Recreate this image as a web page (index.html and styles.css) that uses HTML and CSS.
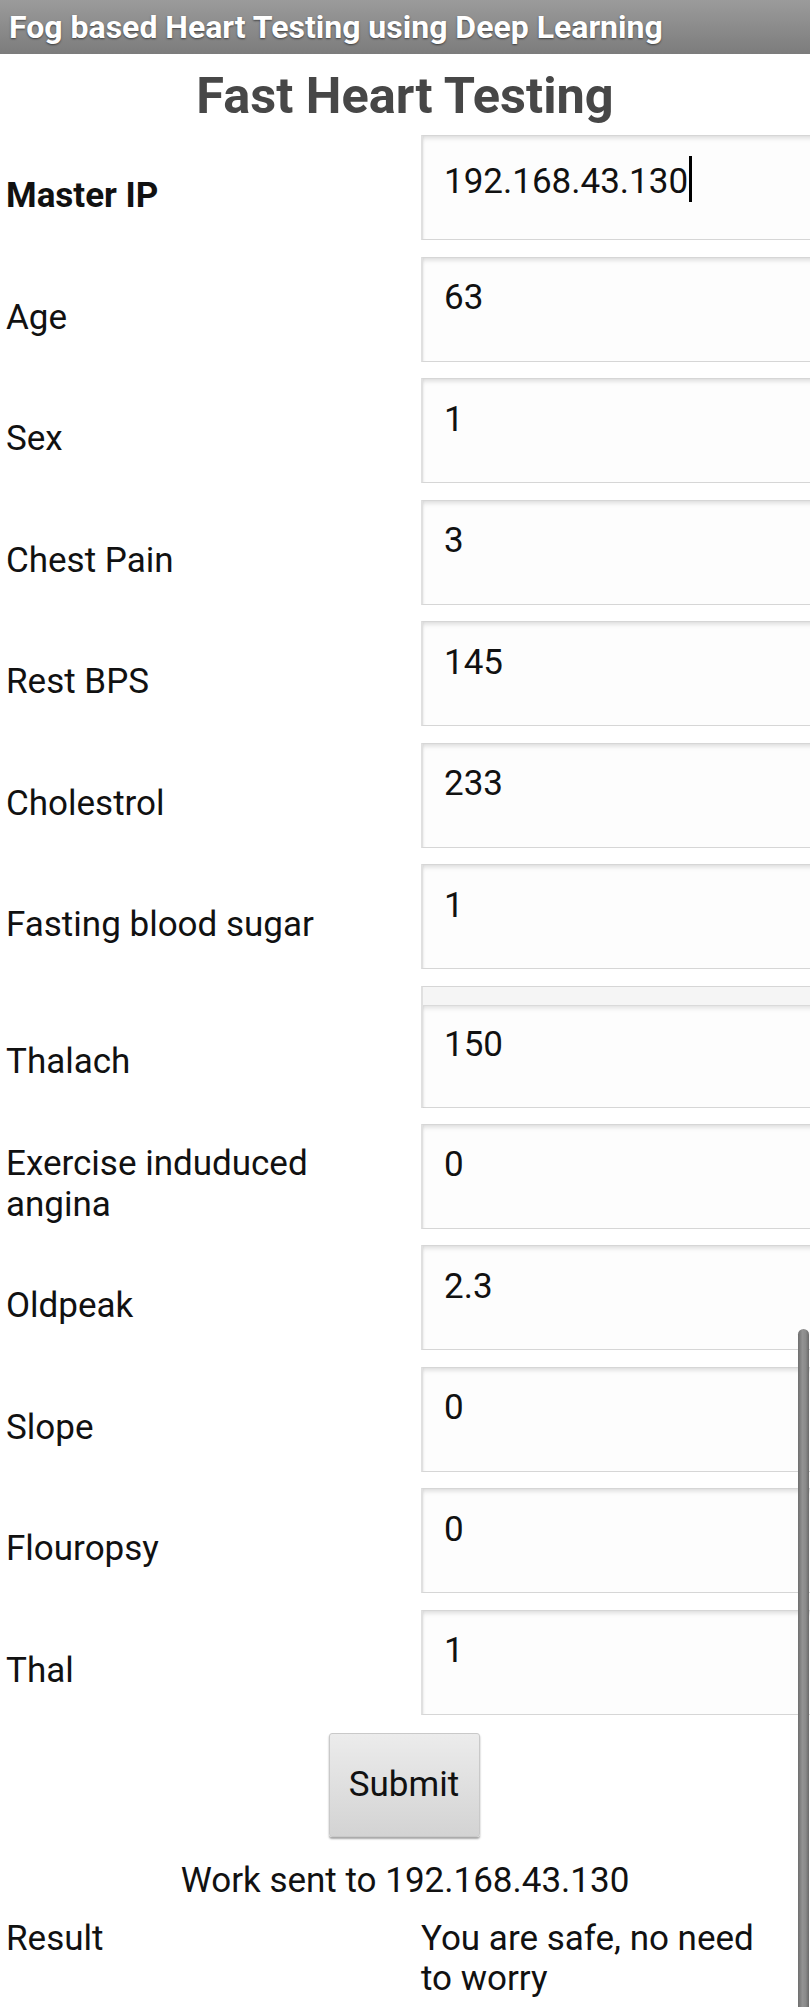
FILE: index.html
```html
<!DOCTYPE html>
<html>
<head>
<meta charset="utf-8">
<link rel="stylesheet" href="styles.css">
</head>
<body>
<div class="appbar">Fog based Heart Testing using Deep Learning</div>
<h1 class="heading">Fast Heart Testing</h1>
<div class="form">
  <div class="label bold">Master IP</div>
  <div class="field">192.168.43.130<span class="caret"></span></div>

  <div class="label">Age</div>
  <div class="field">63</div>

  <div class="label">Sex</div>
  <div class="field">1</div>

  <div class="label">Chest Pain</div>
  <div class="field">3</div>

  <div class="label">Rest BPS</div>
  <div class="field">145</div>

  <div class="label">Cholestrol</div>
  <div class="field">233</div>

  <div class="label">Fasting blood sugar</div>
  <div class="field">1</div>

  <div class="label low">Thalach</div>
  <div class="field tall"><div class="strip"></div><div class="inner">150</div></div>

  <div class="label">Exercise induduced angina</div>
  <div class="field">0</div>

  <div class="label">Oldpeak</div>
  <div class="field">2.3</div>

  <div class="label">Slope</div>
  <div class="field">0</div>

  <div class="label">Flouropsy</div>
  <div class="field">0</div>

  <div class="label">Thal</div>
  <div class="field">1</div>
</div>
<div class="actions">
  <button class="submit" type="button">Submit</button>
</div>
<div class="status">Work sent to 192.168.43.130</div>
<div class="result">
  <div class="result-label">Result</div>
  <div class="result-value">You are safe, no need to worry</div>
</div>
<div class="scrollbar"></div>
</body>
</html>
```
FILE: styles.css
```css
html, body {
  margin: 0;
  padding: 0;
}
body {
  width: 810px;
  min-height: 2007px;
  overflow: hidden;
  position: relative;
  background: #ffffff;
  font-family: Roboto, "Noto Sans", sans-serif;
  font-size: 35px;
  color: #111;
}
.appbar {
  height: 54px;
  box-sizing: border-box;
  padding-left: 9px;
  background: linear-gradient(#9b9b9b, #7c7c7c);
  color: #fff;
  font-weight: 700;
  font-size: 32px;
  line-height: 54px;
  text-shadow: 0 1px 2px rgba(0,0,0,0.55);
  white-space: nowrap;
}
.heading {
  margin: 12px 0 0;
  text-align: center;
  font-size: 50.5px;
  font-weight: 700;
  color: #474747;
  line-height: 59px;
}
.form {
  margin-top: 10px;
  display: grid;
  grid-template-columns: 421px 1fr;
}
.label {
  align-self: center;
  padding: 0 20px 0 6px;
  line-height: 41px;
  color: #111;
}
.label.bold {
  font-weight: 700;
}
.label.low {
  padding-top: 14px;
}
.field {
  position: relative;
  height: 105px;
  margin-bottom: 16.5px;
  width: 400px;
  box-sizing: border-box;
  padding: 19.5px 0 0 21px;
  line-height: 41px;
  border: 1px solid #d6d6d6;
  border-left: 2px solid #e0e0e0;
  border-right: none;
  background: #fdfdfd;
  box-shadow: inset 0 4px 5px -2px rgba(0,0,0,0.14), inset 2px 0 3px -2px rgba(0,0,0,0.08);
  color: #111;
}
.field.tall {
  height: 122px;
  margin-bottom: 16px;
  padding: 0;
}
.strip {
  height: 18px;
  border-bottom: 1px solid #dadada;
  background: #f5f5f5;
}
.inner {
  padding: 18px 0 0 21px;
  line-height: 41px;
  box-shadow: inset 0 4px 5px -2px rgba(0,0,0,0.12);
  height: 102px;
  box-sizing: border-box;
}
.caret {
  display: inline-block;
  width: 3px;
  height: 46px;
  background: #000;
  vertical-align: -9px;
  margin-left: 1px;
}
.actions {
  display: flex;
  justify-content: center;
  margin-top: 1.5px;
}
.submit {
  width: 151px;
  height: 104px;
  padding: 0;
  font-family: Roboto, "Noto Sans", sans-serif;
  font-size: 35px;
  color: #111;
  border: 1px solid #c9c9c9;
  border-radius: 3px;
  background: linear-gradient(#ececec, #d3d3d3);
  box-shadow: 0 2px 2px rgba(0,0,0,0.35);
  margin-left: -2px;
}
.status {
  margin-top: 23px;
  text-align: center;
  line-height: 41px;
}
.result {
  margin-top: 18px;
  display: grid;
  grid-template-columns: 421px 1fr;
  line-height: 40px;
}
.result-label {
  padding-left: 6px;
}
.result-value {
  padding-right: 30px;
}
.scrollbar {
  position: absolute;
  left: 798px;
  top: 1329px;
  width: 11px;
  height: 700px;
  box-sizing: border-box;
  border-radius: 6px 6px 0 0;
  background: linear-gradient(90deg, #6e6e6e, #939393 40%, #8a8a8a 70%, #6a6a6a);
}
```
